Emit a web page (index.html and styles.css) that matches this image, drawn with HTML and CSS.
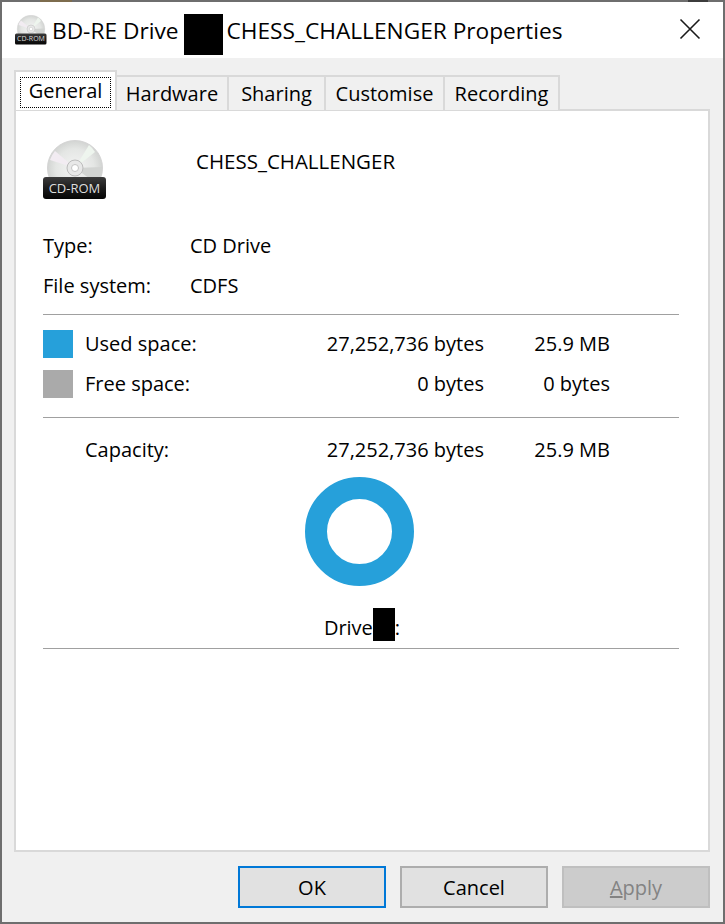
FILE: index.html
```html
<!DOCTYPE html>
<html lang="en">
<head>
    <meta charset="UTF-8">
    <title>BD-RE Drive CHESS_CHALLENGER Properties</title>
    <link rel="stylesheet" href="styles.css">
</head>
<body>
    <svg class="defs" width="0" height="0">
        <defs>
            <radialGradient id="disc" cx="50%" cy="50%" r="50%">
                <stop offset="0" stop-color="#f4f4f4"/>
                <stop offset="0.7" stop-color="#e4e6e4"/>
                <stop offset="1" stop-color="#d2d4d2"/>
            </radialGradient>
            <linearGradient id="badge" x1="0" y1="0" x2="0" y2="1">
                <stop offset="0" stop-color="#3c3c3c"/>
                <stop offset="0.5" stop-color="#1c1c1c"/>
                <stop offset="1" stop-color="#050505"/>
            </linearGradient>
            <symbol id="cd" viewBox="0 0 64 60">
                <circle cx="32" cy="28" r="27.5" fill="url(#disc)" stroke="#d4d4d4"/>
                <path d="M32 28 L46 5 A27 27 0 0 1 52 12 Z" fill="#eef5ee"/>
                <path d="M32 28 L7 20 A27 27 0 0 1 12 11 Z" fill="#f2ecf2"/>
                <path d="M32 28 L59 27 A27 27 0 0 1 54 44 Z" fill="#d2d4d2"/>
                <circle cx="32" cy="28" r="8" fill="#e8e8e8" stroke="#bcbcbc"/>
                <circle cx="32" cy="28" r="3.5" fill="#fff" stroke="#c4c4c4"/>
                <rect x="0" y="37" width="63" height="22" rx="3" fill="url(#badge)"/>
            </symbol>
        </defs>
    </svg>

    <div class="window">
        <div class="edge"></div>
        <div class="titlebar">
            <div class="title-icon">
                <svg width="32" height="30" viewBox="0 0 64 60"><use href="#cd"/></svg>
                <span class="title-badge">CD-ROM</span>
            </div>
            <div class="title-text">BD-RE Drive<span class="redact redact-title"></span>CHESS_CHALLENGER Properties</div>
            <svg class="close" width="22" height="22" viewBox="0 0 22 22">
                <path d="M1.5 1.5 L20.5 20.5 M20.5 1.5 L1.5 20.5" stroke="#1a1a1a" stroke-width="1.6" fill="none"/>
            </svg>
        </div>

        <div class="content">
            <div class="tabs">
                <div class="tab active"><span class="focus">General</span></div>
                <div class="tab tab-hardware">Hardware</div>
                <div class="tab tab-sharing">Sharing</div>
                <div class="tab tab-customise">Customise</div>
                <div class="tab tab-recording">Recording</div>
            </div>

            <div class="panel">
                <div class="head">
                    <div class="big-icon">
                        <svg width="64" height="60" viewBox="0 0 64 60"><use href="#cd"/></svg>
                        <span class="big-badge">CD-ROM</span>
                    </div>
                    <div class="volume">CHESS_CHALLENGER</div>
                </div>

                <div class="info">
                    <div>Type:</div><div>CD Drive</div>
                    <div>File system:</div><div>CDFS</div>
                </div>

                <hr class="rule rule-one">

                <div class="space">
                    <div class="swatch used"></div><div>Used space:</div><div class="num">27,252,736 bytes</div><div class="num">25.9 MB</div>
                    <div class="swatch free"></div><div>Free space:</div><div class="num">0 bytes</div><div class="num">0 bytes</div>
                </div>

                <hr class="rule rule-two">

                <div class="space capacity">
                    <div></div><div>Capacity:</div><div class="num">27,252,736 bytes</div><div class="num">25.9 MB</div>
                </div>

                <div class="ring"></div>

                <div class="drive-label">Drive<span class="redact redact-drive"></span>:</div>

                <hr class="rule rule-three">
            </div>

            <div class="buttons">
                <button class="btn btn-default">OK</button>
                <button class="btn">Cancel</button>
                <button class="btn btn-off"><u>A</u>pply</button>
            </div>
        </div>
    </div>
</body>
</html>
```

FILE: styles.css
```css
* {
    box-sizing: border-box;
}

html, body {
    margin: 0;
    height: 100%;
}

body {
    font-family: "Open Sans", "Noto Sans", sans-serif;
    font-size: 20px;
    color: #000;
    overflow: hidden;
}

.defs {
    position: absolute;
}

.window {
    height: 924px;
    border: 2px solid #6e6e6e;
    border-top: 0;
    background: #f0f0f0;
    display: flex;
    flex-direction: column;
}

.edge {
    height: 2px;
    flex: none;
    margin: 0 -2px;
    background: linear-gradient(to right,
        #6e6e6e 40px, #7d6c4e 40px, #7d6c4e 72px, #6e6e6e 72px,
        #6e6e6e 688px, #3c3c3c 688px, #3c3c3c 708px, #6e6e6e 708px);
}

.titlebar {
    height: 56px;
    background: #fff;
    display: flex;
    align-items: center;
    padding-left: 13px;
    flex: none;
}

.title-icon {
    position: relative;
    width: 32px;
    height: 30px;
    margin-right: 5px;
}

.title-icon svg, .big-icon svg {
    display: block;
}

.title-badge {
    position: absolute;
    left: 0;
    top: 19px;
    width: 32px;
    text-align: center;
    font-size: 7px;
    line-height: 10px;
    color: #ddd;
}

.title-text {
    flex: 1;
    white-space: nowrap;
    line-height: 30px;
    font-size: 22.7px;
    padding-top: 2px;
}

.redact {
    display: inline-block;
    background: #000;
}

.redact-title {
    width: 39px;
    height: 41px;
    vertical-align: middle;
    margin: -8px 3px -12px 6px;
}

.close {
    margin: 0 22px 2px 0;
}

.content {
    flex: 1;
    display: flex;
    flex-direction: column;
    padding: 13px 13px 14px 12px;
}

.tabs {
    display: flex;
    align-items: flex-end;
    height: 39px;
    flex: none;
    position: relative;
    z-index: 1;
    margin-bottom: -1px;
}

.tab {
    height: 35px;
    border: 2px solid #d9d9d9;
    border-left: 0;
    border-bottom: 0;
    background: #f0f0f0;
    text-align: center;
    line-height: 33px;
}

.tab.active {
    width: 103px;
    height: 40px;
    background: #fff;
    border: 2px solid #d9d9d9;
    border-bottom: 0;
    padding: 5px 4px 0;
}

.focus {
    display: block;
    height: 31px;
    line-height: 26px;
    border: 1px dotted #000;
}

.tab-hardware { width: 112px; }
.tab-sharing { width: 97px; }
.tab-customise { width: 119px; }
.tab-recording { width: 115px; }

.panel {
    flex: 1;
    background: #fff;
    border: 2px solid #d9d9d9;
    padding: 0 29px 0 27px;
}

.head {
    display: flex;
    height: 86px;
    padding-top: 29px;
}

.big-icon {
    position: relative;
    width: 64px;
    height: 60px;
}

.big-badge {
    position: absolute;
    left: 0;
    top: 38px;
    width: 63px;
    text-align: center;
    font-size: 13px;
    line-height: 20px;
    color: #ddd;
}

.volume {
    margin-left: 89px;
    line-height: 24px;
    margin-top: 9px;
    font-size: 20.5px;
}

.info {
    display: grid;
    grid-template-columns: 147px 1fr;
    grid-auto-rows: 40px;
    align-items: center;
    margin-top: 29px;
}

.info div, .space div {
    padding-bottom: 2px;
}

.rule {
    border: 0;
    height: 1px;
    background: #a0a0a0;
    margin: 0;
}

.rule-one {
    margin-top: 8px;
}

.space {
    display: grid;
    grid-template-columns: 42px 200px 199px 126px;
    grid-auto-rows: 40px;
    align-items: center;
    margin-top: 9px;
}

.space .swatch {
    width: 30px;
    height: 28px;
    padding: 0;
}

.used { background: #26a0da; }
.free { background: #aaaaaa; }

.num {
    text-align: right;
}

.rule-two {
    margin-top: 13px;
}

.capacity {
    margin-top: 12px;
}

.ring {
    width: 109px;
    height: 109px;
    border-radius: 50%;
    border: 22px solid #26a0da;
    margin: 7px 0 0 262px;
}

.drive-label {
    text-align: center;
    line-height: 28px;
    margin-top: 28px;
    padding-left: 2px;
}

.redact-drive {
    width: 22px;
    height: 33px;
    vertical-align: -6px;
    margin-top: -6px;
}

.rule-three {
    margin-top: 6px;
}

.buttons {
    display: flex;
    justify-content: flex-end;
    gap: 14px;
    padding-top: 14px;
    flex: none;
}

.btn {
    width: 148px;
    height: 42px;
    font-family: inherit;
    font-size: 20px;
    background: #e1e1e1;
    border: 2px solid #adadad;
    padding: 0;
    color: #000;
}

.btn-default {
    border-color: #0078d7;
}

.btn-off {
    background: #cccccc;
    border-color: #bfbfbf;
    color: #838383;
}
```
